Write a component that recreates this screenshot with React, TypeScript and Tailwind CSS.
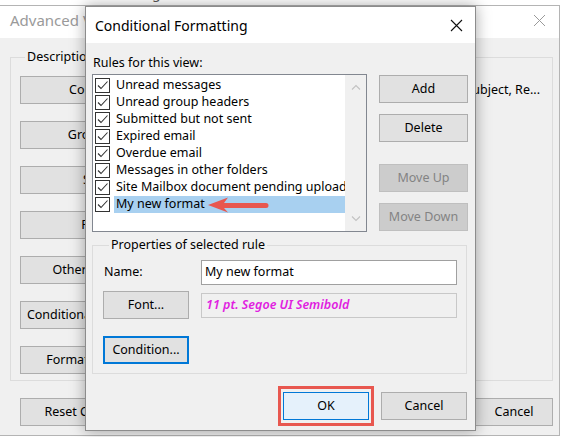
import React from "react";

type Variant = "normal" | "disabled" | "focus" | "default";

function Btn({
  children,
  className = "",
  variant = "normal",
}: {
  children?: React.ReactNode;
  className?: string;
  variant?: Variant;
}) {
  const v =
    variant === "disabled"
      ? "border border-[#bfbfbf] bg-[#cccccc] text-[#838383]"
      : variant === "focus"
      ? "border-2 border-[#0078d7] bg-[#e1e1e1] text-black"
      : variant === "default"
      ? "border border-[#0078d7] bg-[#e5f1fb] text-black"
      : "border border-[#adadad] bg-[#e1e1e1] text-black";
  return (
    <div
      className={`flex items-center justify-center whitespace-nowrap text-[12.5px] leading-none ${v} ${className}`}
    >
      {children}
    </div>
  );
}

function Check() {
  return (
    <div className="flex h-[15px] w-[15px] shrink-0 items-center justify-center border border-[#333333] bg-white">
      <svg width="13" height="13" viewBox="0 0 13 13">
        <polyline
          points="2,6.5 5,9.5 11.5,2.5"
          fill="none"
          stroke="#333333"
          strokeWidth="1.1"
        />
      </svg>
    </div>
  );
}

const rules = [
  "Unread messages",
  "Unread group headers",
  "Submitted but not sent",
  "Expired email",
  "Overdue email",
  "Messages in other folders",
  "Site Mailbox document pending upload",
  "My new format",
];

export default function App() {
  return (
    <div className="relative h-[437px] w-[562px] overflow-hidden bg-white font-['Noto_Sans',sans-serif] text-black">
      {/* strip of window behind */}
      <div className="h-[5px] overflow-hidden">
        <div className="-mt-[17px] whitespace-nowrap pl-[8px] text-[14px] leading-[20px] text-[#555]">
          Conditional Formatting&nbsp;&nbsp;&nbsp;&nbsp;&nbsp;&nbsp;Customize Current View
        </div>
      </div>

      {/* Background window: Advanced View Settings */}
      <div className="absolute left-0 top-[5px] flex h-[431px] w-[560px] flex-col border-b border-r border-t border-[#b4b4b4]">
        <div className="flex h-[32px] items-start justify-between bg-white pl-[10px] pr-[13px] pt-[4px]">
          <span className="text-[15px] leading-[20px] text-[#9a9a9a]">Advanced View Settings: Compact</span>
          <svg width="13" height="13" viewBox="0 0 13 13" className="mt-[4px]">
            <path d="M1 1L12 12M12 1L1 12" stroke="#9a9a9a" strokeWidth="1" />
          </svg>
        </div>
        <div className="flex flex-1 flex-col bg-[#f0f0f0]">
          <fieldset className="ml-[10px] mt-[11px] h-[332px] w-[543px] border border-[#dcdcdc] pl-[9px] pr-[12px]">
            <legend className="ml-[5px] px-[2px] text-[12.5px] leading-[16px]">Description</legend>
            <div className="flex flex-col gap-[17px] pt-[11px]">
              <div className="flex items-center">
                <Btn className="h-[28px] w-[160px] shrink-0">Columns...</Btn>
                <div className="flex min-w-0 flex-1 justify-end whitespace-nowrap text-[12.5px]">
                  From, Subject, Re...
                </div>
              </div>
              <Btn className="h-[28px] w-[160px]">Group By...</Btn>
              <Btn className="h-[28px] w-[160px]">Sort...</Btn>
              <Btn className="h-[28px] w-[160px]">Filter...</Btn>
              <Btn className="h-[28px] w-[160px]">Other Settings...</Btn>
              <Btn className="h-[28px] w-[160px]">Conditional Formatting...</Btn>
              <Btn className="h-[28px] w-[160px]">Format Columns...</Btn>
            </div>
          </fieldset>
          <div className="mt-[17px] flex justify-between pl-[20px] pr-[6px]">
            <Btn className="h-[28px] w-[160px]">Reset Current View</Btn>
            <Btn className="h-[28px] w-[78px]">Cancel</Btn>
          </div>
        </div>
      </div>

      {/* Dialog: Conditional Formatting */}
      <div className="absolute left-[85px] top-[6px] flex h-[425px] w-[391px] flex-col border border-[#8c8c8c] bg-[#f0f0f0] shadow-[0_0_14px_rgba(0,0,0,0.35)]">
        <div className="flex h-[36px] shrink-0 items-center justify-between bg-white pl-[9px] pr-[12px]">
          <span className="text-[14px]">Conditional Formatting</span>
          <svg width="13" height="13" viewBox="0 0 13 13">
            <path d="M1 1L12 12M12 1L1 12" stroke="#111" strokeWidth="1.1" />
          </svg>
        </div>
        <div className="flex flex-1 flex-col pl-[6px] pr-[8px]">
          <div className="ml-[1px] mt-[11px] text-[12.5px] leading-[17px]">Rules for this view:</div>
          <div className="mt-[3px] flex">
            <div className="flex h-[158px] w-[275px] border border-[#828790] bg-white">
              <div className="flex min-w-0 flex-1 flex-col pl-[2px] pt-[2px]">
                {rules.map((r, i) => (
                  <div key={r} className="flex h-[17px] items-center">
                    <Check />
                    <div
                      className={`ml-[4px] flex h-[17px] min-w-0 flex-1 items-center overflow-hidden whitespace-nowrap pl-[2px] text-[12.5px] leading-none ${
                        i === 7 ? "bg-[#a8d0f0]" : ""
                      }`}
                    >
                      {r}
                      {i === 7 && (
                        <svg width="64" height="18" viewBox="0 0 64 18" className="ml-[3px] shrink-0">
                          <path d="M0 9L20 1.5L16 7H58a2 2 0 0 1 0 5H16L20 16.5Z" fill="#e8574f" />
                        </svg>
                      )}
                    </div>
                  </div>
                ))}
              </div>
              <div className="flex w-[21px] shrink-0 flex-col items-center justify-between bg-[#f0f0f0] py-[9px]">
                <svg width="10" height="6" viewBox="0 0 10 6">
                  <path d="M1 5.5L5 1.5L9 5.5" fill="none" stroke="#c2c2c2" strokeWidth="1.1" />
                </svg>
                <svg width="10" height="6" viewBox="0 0 10 6">
                  <path d="M1 0.5L5 4.5L9 0.5" fill="none" stroke="#c2c2c2" strokeWidth="1.1" />
                </svg>
              </div>
            </div>
            <div className="ml-[12px] flex flex-col pt-[1px]">
              <Btn className="h-[28px] w-[89px]">Add</Btn>
              <Btn className="mt-[11px] h-[28px] w-[89px]">Delete</Btn>
              <Btn variant="disabled" className="mt-[22px] h-[28px] w-[89px]">Move Up</Btn>
              <Btn variant="disabled" className="mt-[11px] h-[28px] w-[89px]">Move Down</Btn>
            </div>
          </div>
          <fieldset className="mt-[5px] h-[137px] w-[375px] border border-[#dcdcdc] pl-[10px] pr-[8px]">
            <legend className="ml-[6px] px-[2px] text-[12.5px] leading-[16px]">Properties of selected rule</legend>
            <div className="flex flex-col pt-[7px]">
              <div className="flex items-center">
                <div className="w-[98px] pl-[1px] text-[12.5px]">Name:</div>
                <div className="flex h-[25px] w-[256px] items-center border border-[#a0a0a0] bg-white pl-[3px] text-[12.5px]">
                  My new format
                </div>
              </div>
              <div className="mt-[6px] flex items-center">
                <Btn className="h-[28px] w-[86px]">Font...</Btn>
                <div className="ml-[12px] flex h-[25px] w-[256px] items-center border border-[#c8c8c8] bg-[#f0f0f0] pl-[4px] text-[12.5px] font-semibold italic text-[#e020e0]">
                  11 pt. Segoe UI Semibold
                </div>
              </div>
              <Btn variant="focus" className="mt-[17px] h-[28px] w-[86px]">Condition...</Btn>
            </div>
          </fieldset>
          <div className="mt-[12px] flex items-center justify-end gap-[7px]">
            <div className="border-[3px] border-[#e8574f] px-[2px] py-[3px]">
              <Btn variant="default" className="h-[28px] w-[86px]">OK</Btn>
            </div>
            <Btn className="h-[28px] w-[86px]">Cancel</Btn>
          </div>
        </div>
      </div>
    </div>
  );
}
